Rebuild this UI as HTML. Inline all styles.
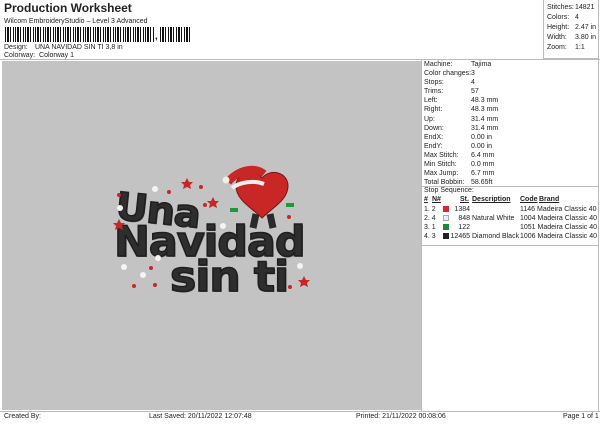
<!DOCTYPE html>
<html><head><style>
*{margin:0;padding:0;box-sizing:border-box}
body{width:600px;height:424px;background:#fff;font-family:"Liberation Sans",sans-serif;position:relative;overflow:hidden;color:#222}
.a{position:absolute;white-space:nowrap}
.s{font-size:7px}
.et{position:absolute;font-family:"DejaVu Sans","Liberation Sans",sans-serif;font-weight:bold;color:#2e2e2e;-webkit-text-stroke:1.5px #1e1e1e;letter-spacing:-1px;text-shadow:1px 1px 0 #555;transform-origin:0 0}
</style></head><body>
<div class="a" style="left:4px;top:1px;font-size:12px;font-weight:bold">Production Worksheet</div>
<div class="a s" style="left:4px;top:18px">Wilcom EmbroideryStudio – Level 3 Advanced</div>
<div class="a" style="left:5px;top:27px;width:150px;height:15px;background:repeating-linear-gradient(90deg,#111 0 1px,#fff 1px 2px,#111 2px 4px,#fff 4px 5px,#111 5px 6px,#fff 6px 8px,#111 8px 9px,#fff 9px 10px)"></div>
<div class="a" style="left:155px;top:31px;font-size:10px;font-weight:bold">,</div>
<div class="a" style="left:160px;top:27px;width:32px;height:15px;background:repeating-linear-gradient(90deg,#111 0 1px,#fff 1px 2px,#111 2px 4px,#fff 4px 5px,#111 5px 6px,#fff 6px 8px)"></div>
<div class="a s" style="left:4px;top:44px">Design:</div>
<div class="a s" style="left:35px;top:44px">UNA NAVIDAD SIN TI 3,8 in</div>
<div class="a s" style="left:4px;top:52px">Colorway:&nbsp; Colorway 1</div>
<div class="a" style="left:543px;top:0;width:56px;height:59px;border-left:1px solid #bbb;border-right:1px solid #bbb;border-bottom:1px solid #bbb"></div>
<div class="a s" style="left:547px;top:3px;line-height:10px">Stitches:<br>Colors:<br>Height:<br>Width:<br>Zoom:</div>
<div class="a s" style="left:575px;top:3px;line-height:10px">14821<br>4<br>2.47 in<br>3.80 in<br>1:1</div>
<div class="a" style="left:0;top:59px;width:600px;border-top:1px solid #bbb"></div>
<div class="a" style="left:2px;top:61px;width:419px;height:349px;background:#c3c3c3"></div>
<div class="a" style="left:421px;top:59px;width:178px;height:352px;border-left:1px solid #bbb;border-right:1px solid #bbb"></div>
<div class="a s" style="left:424px;top:60px;line-height:9.1px">Machine:<br>Color changes:<br>Stops:<br>Trims:<br>Left:<br>Right:<br>Up:<br>Down:<br>EndX:<br>EndY:<br>Max Stitch:<br>Min Stitch:<br>Max Jump:<br>Total Bobbin:</div>
<div class="a s" style="left:471px;top:60px;line-height:9.1px">Tajima<br>3<br>4<br>57<br>48.3 mm<br>48.3 mm<br>31.4 mm<br>31.4 mm<br>0.00 in<br>0.00 in<br>6.4 mm<br>0.0 mm<br>6.7 mm<br>58.65ft</div>
<div class="a" style="left:421px;top:186px;width:178px;border-top:1px solid #bbb"></div>
<div class="a s" style="left:424px;top:187px">Stop Sequence:</div>
<div class="a s" style="left:424px;top:196px;font-weight:bold;text-decoration:underline">#</div>
<div class="a s" style="left:432px;top:196px;font-weight:bold;text-decoration:underline">N#</div>
<div class="a s" style="left:460px;top:196px;font-weight:bold;text-decoration:underline">St.</div>
<div class="a s" style="left:472px;top:196px;font-weight:bold;text-decoration:underline">Description</div>
<div class="a s" style="left:520px;top:196px;font-weight:bold;text-decoration:underline">Code</div>
<div class="a s" style="left:539px;top:196px;font-weight:bold;text-decoration:underline">Brand</div>
<div class="a s" style="left:424px;top:205px;line-height:9.1px">1. 2<br>2. 4<br>3. 1<br>4. 3</div>
<div class="a" style="left:443px;top:206px;width:6px;height:6px;background:#d42a2a"></div>
<div class="a" style="left:443px;top:215px;width:6px;height:6px;background:#eee;border:1px solid #aaa"></div>
<div class="a" style="left:443px;top:224px;width:6px;height:6px;background:#1a8a3a"></div>
<div class="a" style="left:443px;top:233px;width:6px;height:6px;background:#222"></div>
<div class="a s" style="left:448px;top:205px;width:22px;text-align:right;line-height:9.1px">1384<br>848<br>122<br>12465</div>
<div class="a s" style="left:472px;top:205px;line-height:9.1px">&nbsp;<br>Natural White<br>&nbsp;<br>Diamond Black</div>
<div class="a s" style="left:520px;top:205px;line-height:9.1px">1146 Madeira Classic 40<br>1004 Madeira Classic 40<br>1051 Madeira Classic 40<br>1006 Madeira Classic 40</div>
<div class="a" style="left:421px;top:245px;width:178px;border-top:1px solid #bbb"></div>
<div class="a" style="left:0;top:411px;width:600px;border-top:1px solid #bbb"></div>
<div class="a s" style="left:4px;top:413px">Created By:</div>
<div class="a s" style="left:149px;top:413px">Last Saved: 20/11/2022 12:07:48</div>
<div class="a s" style="left:356px;top:413px">Printed: 21/11/2022 00:08:06</div>
<div class="a s" style="left:563px;top:413px">Page 1 of 1</div>
<!-- embroidery -->
<div class="et" style="left:118px;top:184px;font-size:38px;transform:rotate(6deg) scaleX(1.05)">Una</div>
<div class="et" style="left:114px;top:217px;font-size:42px;transform:scaleX(1.02)">Navidad</div>
<div class="et" style="left:170px;top:252px;font-size:42px;transform:scaleX(1.05)">sin ti</div>
<svg class="a" style="left:0;top:0" width="600" height="424">
<path d="M262 178c-8-10-26-6-26 8 0 14 16 22 26 32 10-10 26-18 26-32 0-14-18-18-26-8z" fill="#c92626" stroke="#7a1414"/>
<path d="M228 182c10-12 26-16 36-8" stroke="#c92626" stroke-width="8" fill="none"/>
<path d="M232 188c8-6 22-8 32-4" stroke="#eee" stroke-width="4" fill="none"/>
<circle cx="226" cy="180" r="3.5" fill="#eee"/>
<path d="M256 214l-3 14M270 214l3 14" stroke="#2a2a2a" stroke-width="7"/>
<rect x="230" y="208" width="8" height="4" fill="#1a9a3a"/><rect x="286" y="203" width="8" height="4" fill="#1a9a3a"/>
<g fill="#c92626">
<circle cx="187" cy="183" r="2"/><circle cx="169" cy="192" r="2"/><circle cx="205" cy="205" r="2"/><circle cx="119" cy="195" r="2"/><circle cx="289" cy="217" r="2"/><circle cx="151" cy="268" r="2"/><circle cx="134" cy="286" r="2"/><circle cx="155" cy="285" r="2"/><circle cx="290" cy="287" r="2"/><circle cx="201" cy="187" r="2"/>
<path d="M187 178l2 4 4 0-3 3 1 4-4-2-4 2 1-4-3-3 4 0z"/><path d="M213 197l2 4 4 0-3 3 1 4-4-2-4 2 1-4-3-3 4 0z"/><path d="M119 219l2 4 4 0-3 3 1 4-4-2-4 2 1-4-3-3 4 0z"/><path d="M304 276l2 4 4 0-3 3 1 4-4-2-4 2 1-4-3-3 4 0z"/>
</g>
<g fill="#f4f4f4"><circle cx="120" cy="208" r="3"/><circle cx="155" cy="189" r="3"/><circle cx="158" cy="258" r="3"/><circle cx="124" cy="267" r="3"/><circle cx="143" cy="275" r="3"/><circle cx="300" cy="266" r="3"/><circle cx="223" cy="226" r="3"/></g>
</svg>
</body></html>
